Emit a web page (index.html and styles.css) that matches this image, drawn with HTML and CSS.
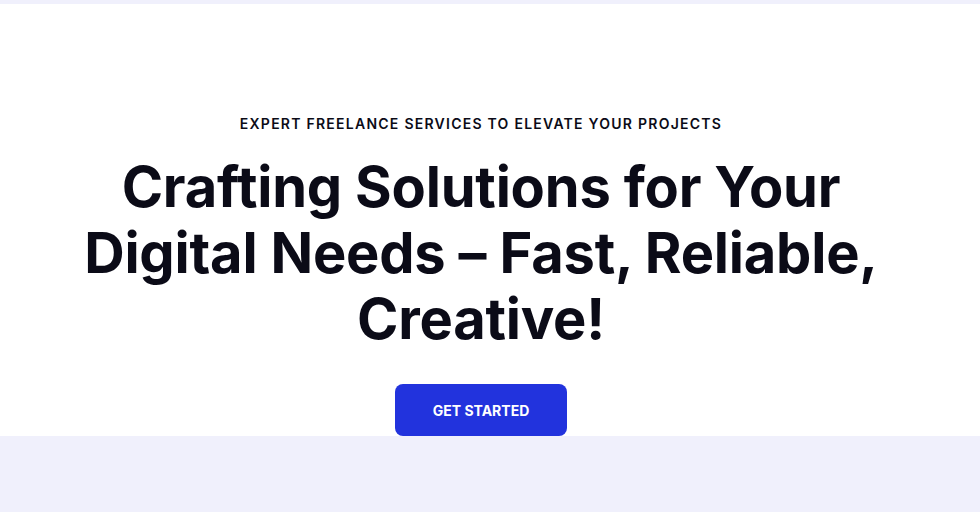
FILE: index.html
```html
<!DOCTYPE html>
<html lang="en">

<head>
    <meta charset="UTF-8">
    <meta name="viewport" content="width=device-width, initial-scale=1.0">
    <title>Freelance Services</title>
    <link rel="stylesheet" href="styles.css">
</head>

<body>
    <div class="top-strip"></div>

    <section class="hero">
        <p class="hero-eyebrow">Expert freelance services to elevate your projects</p>
        <h1 class="hero-title">Crafting Solutions for Your Digital Needs – Fast, Reliable, Creative!</h1>
        <a href="#" class="hero-button">Get Started</a>
    </section>

    <section class="next-section"></section>
</body>

</html>
```

FILE: styles.css
```css
body {
    margin: 0;
    font-family: Inter, "Noto Sans", sans-serif;
    background-color: #f0f0fc;
    color: #0b0b17;
}

.top-strip {
    height: 4px;
    background-color: #f0f0fc;
}

.hero {
    background: white;
    text-align: center;
    padding: 110px 39px 0 21px;
    display: flex;
    flex-direction: column;
    align-items: center;
}

.hero-eyebrow {
    margin: 0;
    font-size: 14px;
    line-height: 20px;
    font-weight: 600;
    letter-spacing: 1.25px;
    text-transform: uppercase;
}

.hero-title {
    margin: 20px 0 0;
    max-width: 820px;
    font-size: 56px;
    line-height: 66px;
    font-weight: 700;
    letter-spacing: -0.2px;
}

.hero-button {
    display: inline-block;
    margin-top: 32px;
    width: 172px;
    height: 52px;
    line-height: 53px;
    background-color: #2233dd;
    color: white;
    font-size: 14px;
    font-weight: 700;
    text-decoration: none;
    text-transform: uppercase;
    border-radius: 8px;
}

.next-section {
    height: 76px;
    background-color: #f0f0fc;
}
```
